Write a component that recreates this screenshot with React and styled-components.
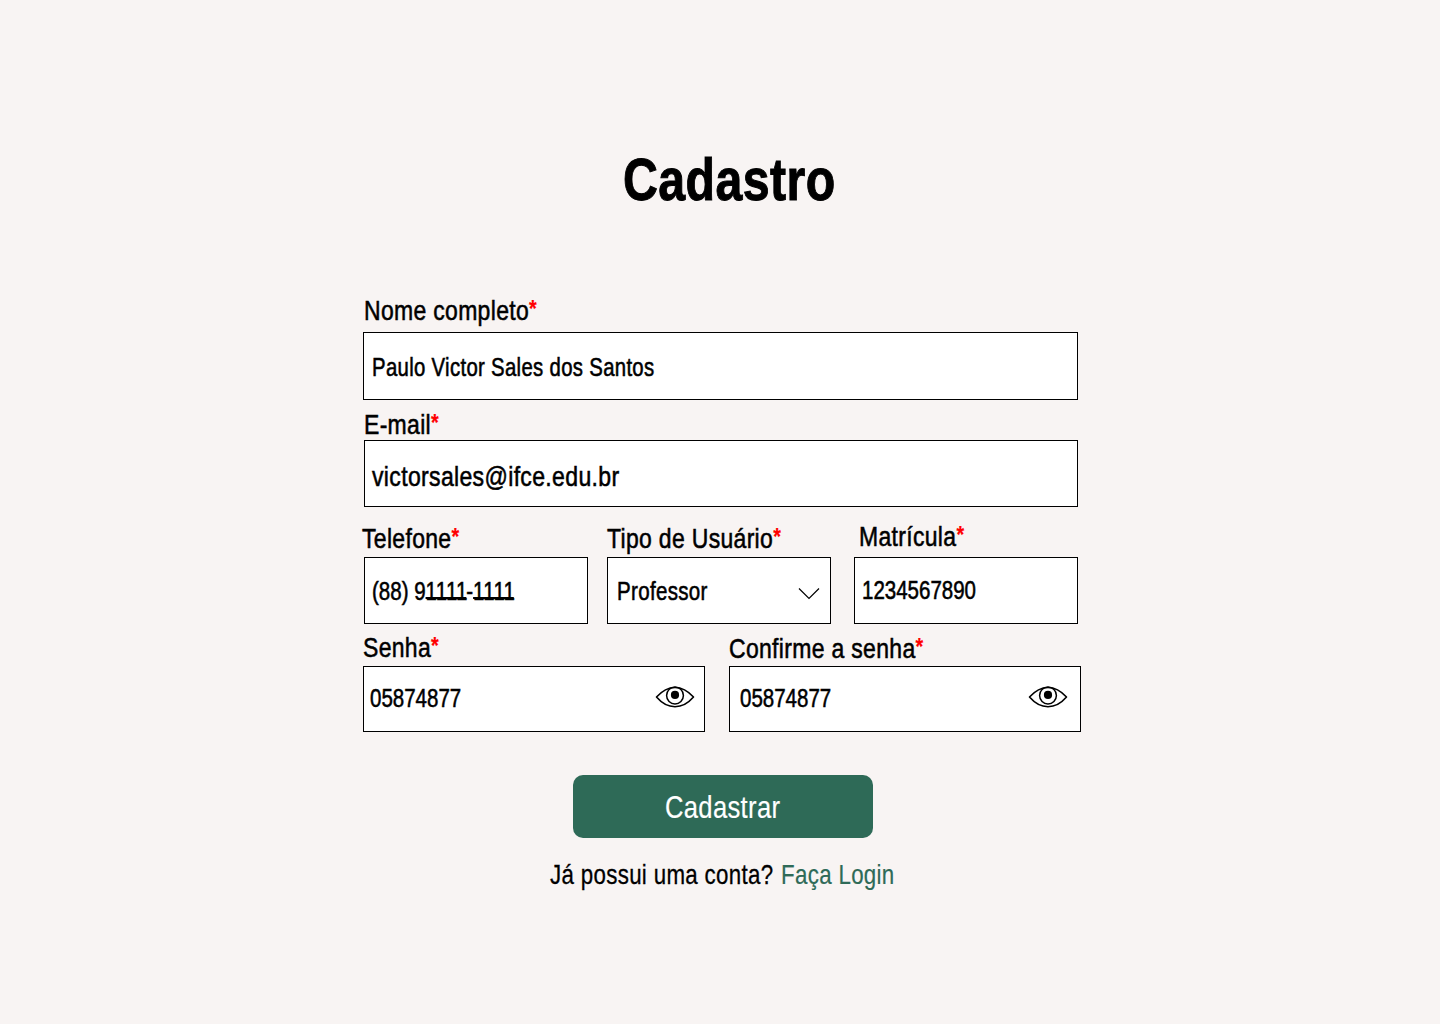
import React from "react";
import styled, { createGlobalStyle } from "styled-components";

const GlobalStyle = createGlobalStyle`
  * { box-sizing: border-box; }
  body {
    margin: 0;
    background: #f8f4f3;
    color: #000;
    font-family: "Liberation Sans", Arial, sans-serif;
  }
`;

const Page = styled.main`
  width: 1440px;
  height: 1024px;
  padding: 145px 0 0 362px;
  overflow: hidden;
`;

/* Condenses its text horizontally, from the left edge. */
const Condensed = styled.span`
  display: block;
  width: max-content;
  white-space: pre;
  transform-origin: 0 50%;
  transform: scaleX(${(p) => p.$fit || 0.82});
  font-size: ${(p) => p.$size || 28}px;
  line-height: ${(p) => p.$line || 32}px;
  letter-spacing: ${(p) => p.$spacing ?? 0.4}px;
  -webkit-text-stroke: ${(p) => p.$stroke ?? 0.55}px currentColor;
`;

const Title = styled.h1`
  margin: 0 0 80px 261px;
  height: 70px;
  font-weight: 700;
`;

const Row = styled.div`
  display: flex;
  align-items: flex-start;
  height: ${(p) => p.$height}px;
`;

const Field = styled.div`
  flex: none;
  width: ${(p) => p.$width}px;
  margin-left: ${(p) => p.$gap || 0}px;
`;

const Label = styled.label`
  display: block;
  height: ${(p) => p.$height}px;
  padding: ${(p) => p.$top || 0}px 0 0 ${(p) => p.$left || 0}px;
`;

const Required = styled.span`
  color: #f00;
  font-size: 24px;
  font-weight: 700;
  line-height: 0;
  vertical-align: 3px;
  -webkit-text-stroke: 0.2px #f00;
`;

const Ones = styled.span`
  font-kerning: none;
  letter-spacing: -1.5px;
  text-decoration: underline;
  text-decoration-thickness: 2px;
  text-decoration-skip-ink: none;
  text-underline-offset: -3px;
`;

const Box = styled.div`
  display: flex;
  align-items: flex-start;
  justify-content: space-between;
  height: ${(p) => p.$height}px;
  padding: ${(p) => p.$top}px ${(p) => p.$right || 0}px 0 ${(p) => p.$left}px;
  background: #fff;
  border: 1px solid #000;
`;

const Icon = styled.svg`
  flex: none;
  display: block;
  margin-top: ${(p) => p.$top}px;
  fill: none;
  stroke: #000;
`;

const Submit = styled.button`
  display: block;
  width: 300px;
  height: 63px;
  margin: 43px 0 0 211px;
  padding: 0 0 0 92px;
  border: 0;
  border-radius: 10px;
  background: #2e6a57;
  color: #fff;
  font-family: inherit;
`;

const Footer = styled.p`
  display: flex;
  margin: 21px 0 0 188px;
`;

const Question = styled.span`
  width: 231px;
`;

const Login = styled.a`
  color: #2e6a57;
`;

const Caption = ({ text, fit, ...box }) => (
  <Label {...box}>
    <Condensed $fit={fit}>
      {text}
      <Required>*</Required>
    </Condensed>
  </Label>
);

const Eye = () => (
  <Icon $top={1} width="40" height="24" viewBox="0 0 40 24" strokeWidth="1.6">
    <path d="M1.500 12C7 6 13 2.500 20 2.500S33 6 38.500 12C33.500 17.800 27.500 21.700 20 21.700S6.500 17.800 1.500 12Z" strokeLinejoin="round" />
    <circle cx="20" cy="10.500" r="8.400" strokeWidth="1.500" />
    <circle cx="20" cy="9.900" r="4.100" fill="#000" stroke="none" />
  </Icon>
);

const Chevron = () => (
  <Icon $top={10} width="22" height="13" viewBox="0 0 22 13" strokeWidth="1.2">
    <path d="M1 1.500L11 11.500L21 1.500" />
  </Icon>
);

export default function App() {
  return (
    <>
      <GlobalStyle />
      <Page>
        <Title>
          <Condensed $size={60} $line={70} $fit={0.805} $spacing={0.5} $stroke={1}>Cadastro</Condensed>
        </Title>
        <Row $height={113}>
          <Field $width={715} $gap={1}>
            <Caption text="Nome completo" $height={37} $left={1} />
            <Box $height={68} $top={20} $left={8}>
              <Condensed $size={25} $line={28} $fit={0.813}>Paulo Victor Sales dos Santos</Condensed>
            </Box>
          </Field>
        </Row>
        <Row $height={113}>
          <Field $width={714} $gap={2}>
            <Caption text="E-mail" $height={32} $top={1} />
            <Box $height={67} $top={20} $left={7}>
              <Condensed $fit={0.823}>victorsales@ifce.edu.br</Condensed>
            </Box>
          </Field>
        </Row>
        <Row $height={110}>
          <Field $width={226}>
            <Caption text="Telefone" $height={36} $top={2} />
            <PhoneBox />
          </Field>
          <Field $width={224} $gap={19}>
            <Caption text="Tipo de Usuário" $height={36} $top={2} />
            <Box $height={67} $top={19} $left={9} $right={10}>
              <Condensed $size={25} $line={28}>Professor</Condensed>
              <Chevron />
            </Box>
          </Field>
          <Field $width={224} $gap={23}>
            <Caption text="Matrícula" $height={36} $left={5} />
            <Box $height={67} $top={18} $left={7}>
              <Condensed $size={25} $line={28} $spacing={0}>1234567890</Condensed>
            </Box>
          </Field>
        </Row>
        <Row $height={101}>
          <Field $width={342} $gap={1}>
            <Caption text="Senha" $height={35} $top={1} />
            <Box $height={66} $top={17} $left={6} $right={9}>
              <Condensed $size={25} $line={28} $spacing={0}>05874877</Condensed>
              <Eye />
            </Box>
          </Field>
          <Field $width={352} $gap={24}>
            <Caption text="Confirme a senha" $height={35} $top={2} />
            <Box $height={66} $top={17} $left={10} $right={12}>
              <Condensed $size={25} $line={28} $spacing={0}>05874877</Condensed>
              <Eye />
            </Box>
          </Field>
        </Row>
        <Submit type="button">
          <Condensed $size={32} $line={36} $fit={0.8} $spacing={0.4} $stroke={0.2}>Cadastrar</Condensed>
        </Submit>
        <Footer>
          <Question>
            <Condensed $fit={0.797} $stroke={0.3}>Já possui uma conta?</Condensed>
          </Question>
          <Login>
            <Condensed $fit={0.797} $stroke={0.2}>Faça Login</Condensed>
          </Login>
        </Footer>
      </Page>
    </>
  );
}

const Inset = styled.div`
  padding-left: 2px;
`;

function PhoneBox() {
  return (
    <Inset>
      <Box $height={67} $top={19} $left={7}>
        <Condensed $size={25} $line={28} $spacing={0}>
          (88) 9<Ones>1111</Ones>-<Ones>1111</Ones>
        </Condensed>
      </Box>
    </Inset>
  );
}
